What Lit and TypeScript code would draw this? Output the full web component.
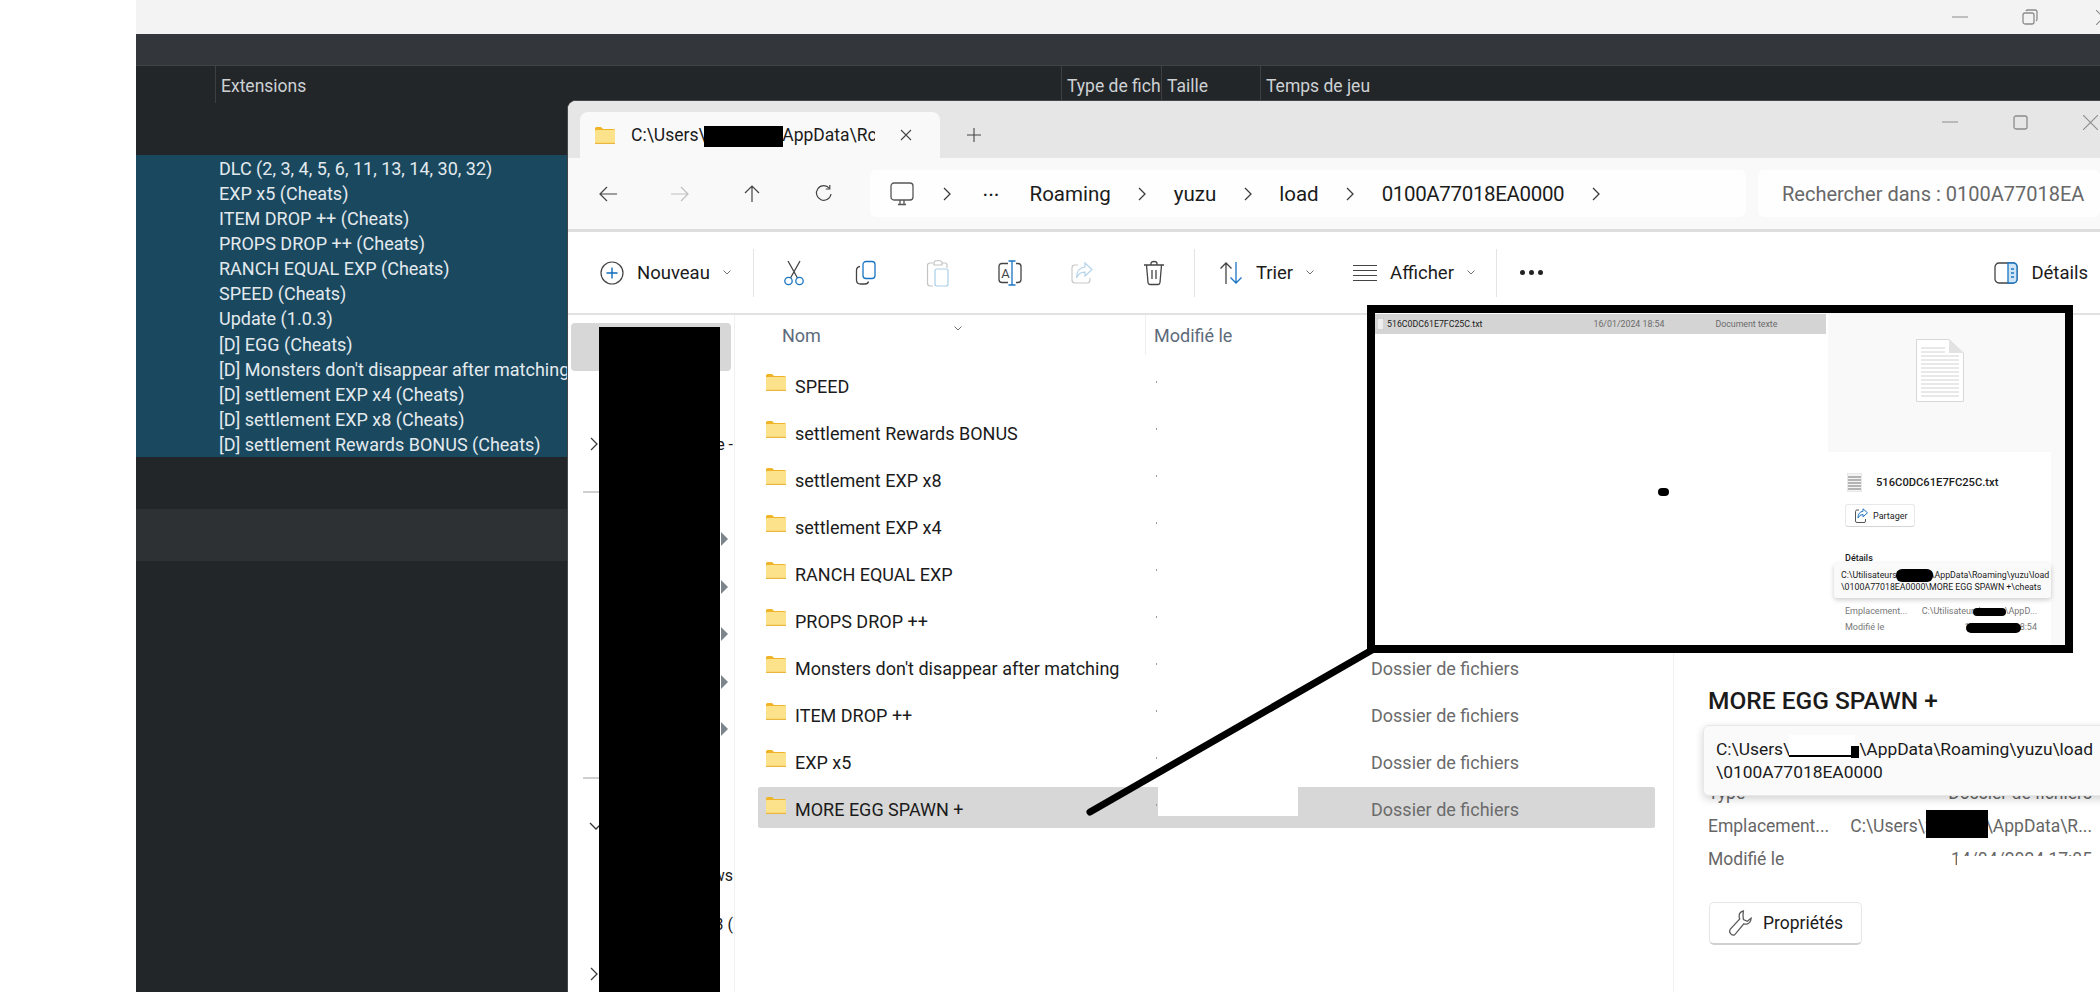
// app.ts - emulator game list with a file explorer window on top, plus the pasted annotation
import { LitElement, html, css } from 'lit';
import { customElement } from 'lit/decorators.js';

const extensions = [
  'DLC (2, 3, 4, 5, 6, 11, 13, 14, 30, 32)',
  'EXP x5 (Cheats)',
  'ITEM DROP ++ (Cheats)',
  'PROPS DROP ++ (Cheats)',
  'RANCH EQUAL EXP (Cheats)',
  'SPEED (Cheats)',
  'Update (1.0.3)',
  '[D] EGG (Cheats)',
  "[D] Monsters don't disappear after matching",
  '[D] settlement EXP x4 (Cheats)',
  '[D] settlement EXP x8 (Cheats)',
  '[D] settlement Rewards BONUS (Cheats)',
];

const folders = [
  'SPEED',
  'settlement Rewards BONUS',
  'settlement EXP x8',
  'settlement EXP x4',
  'RANCH EQUAL EXP',
  'PROPS DROP ++',
  "Monsters don't disappear after matching",
  'ITEM DROP ++',
  'EXP x5',
  'MORE EGG SPAWN +',
];

// things scribbled over the screenshot by whoever took it
const patches = [
  { x: 704, y: 126, w: 79, h: 21, c: '#000', r: 0 },
  { x: 599, y: 327, w: 121, h: 665, c: '#000', r: 0 },
  { x: 1158, y: 787, w: 140, h: 29, c: '#fff', r: 0 },
  { x: 1926, y: 810, w: 62, h: 28, c: '#000', r: 0 },
  { x: 1957, y: 856, w: 140, h: 18, c: '#fff', r: 0 },
  { x: 1789, y: 735, w: 66, h: 24, c: '#fff', r: 0 },
  { x: 1789, y: 755, w: 62, h: 2, c: '#000', r: 0 },
  { x: 1851, y: 746, w: 8, h: 12, c: '#000', r: 0 },
  { x: 1896, y: 569, w: 37, h: 13, c: '#000', r: 6 },
  { x: 1973, y: 608, w: 33, h: 8, c: '#000', r: 4 },
  { x: 1966, y: 623, w: 55, h: 10, c: '#000', r: 5 },
  { x: 1658, y: 488, w: 11, h: 8, c: '#000', r: 5 },
];

const chevR = html`<svg class="chev" width="10" height="16" viewBox="0 0 10 16" fill="none" stroke="#3c3c3c" stroke-width="1.3"><path d="M2 2l6 6-6 6"/></svg>`;
const chevS = html`<svg width="10" height="7" viewBox="0 0 10 7" fill="none" stroke="#707070" stroke-width="1"><path d="M1.5 1.5L5 5l3.5-3.5"/></svg>`;

const folderIcon = html`<svg width="20" height="17" viewBox="0 0 20 17">
  <path d="M0 1.5Q0 0 1.5 0H6l2 2h10.500Q20 2 20 3.500V5H0z" fill="#f0b429"/>
  <rect y="3" width="20" height="14" rx="1" fill="#fde28c"/>
  <rect y="15.800" width="20" height="1.200" fill="#eab73e"/>
</svg>`;

const arrow = (d: string, c: string) => html`<svg width="20" height="18" viewBox="0 0 20 18" fill="none" stroke=${c} stroke-width="1.200"><path d=${d}/></svg>`;

const refresh = html`<svg width="20" height="20" viewBox="0 0 20 20" fill="none" stroke="#444" stroke-width="1.200"><path d="M15.500 4.500A7.300 7.300 0 1 0 17 10"/><path d="M15.800 1v4h-4"/></svg>`;

const monitor = html`<svg width="26" height="24" viewBox="0 0 26 24" fill="none" stroke="#555" stroke-width="1.300"><rect x="2" y="1" width="22" height="17" rx="3"/><path d="M9 22.500h8M11 18v4.500M15 18v4.500"/></svg>`;

const plusCircle = html`<svg width="24" height="24" viewBox="0 0 24 24" fill="none"><circle cx="12" cy="12" r="11" stroke="#444" stroke-width="1.200"/><path d="M12 6.500v11M6.500 12h11" stroke="#0f6cbd" stroke-width="1.400"/></svg>`;

const cut = html`<svg width="22" height="26" viewBox="0 0 22 26" fill="none" stroke-width="1.300"><path d="M5 1l9.500 17M17 1L7.500 18" stroke="#444"/><circle cx="5.500" cy="21" r="3.700" stroke="#1a75c4"/><circle cx="16.500" cy="21" r="3.700" stroke="#1a75c4"/></svg>`;

const copy = html`<svg width="22" height="26" viewBox="0 0 22 26" fill="none" stroke-width="1.300"><rect x="8" y="1.500" width="12" height="17" rx="3" stroke="#1a75c4"/><path d="M5 6.500Q1.500 7 1.500 10.500V20Q1.500 24 5.500 24H10Q13 24 13.500 21.500" stroke="#444"/></svg>`;

const paste = html`<svg width="24" height="28" viewBox="0 0 24 28" fill="none" stroke-width="1.200"><path d="M7 4H4Q1.500 4 1.500 6.500V24Q1.500 27 4 27H7" stroke="#c4c4c4"/><path d="M8 4Q8 1.500 12 1.500T16 4V6H8zM16 4h3Q21 4 21 6V9" stroke="#c4c4c4"/><rect x="9" y="10" width="13" height="17" rx="2" stroke="#a9cfe8"/></svg>`;

const rename = html`<svg width="26" height="26" viewBox="0 0 26 26" fill="none" stroke-width="1.300"><path d="M11 3.500H5Q2 3.500 2 6.500V19.500Q2 22.500 5 22.500H11M19 3.500H21Q24 3.500 24 6.500V19.500Q24 22.500 21 22.500H19" stroke="#444"/><path d="M15 1v24M11.500 1H18.500M11.500 25H18.500" stroke="#1a75c4"/><text x="8.500" y="18" text-anchor="middle" font-family="Roboto, sans-serif" font-size="13" fill="#444" stroke="none">A</text></svg>`;

const share = html`<svg width="24" height="24" viewBox="0 0 24 24" fill="none" stroke-width="1.200"><path d="M8 4H5Q2 4 2 7V19Q2 22 5 22H17Q20 22 20 19V17" stroke="#c8c8c8"/><path d="M15 2l7 6.500-7 6.500v-3.800Q9 11 6.500 17 6.500 7 15 6z" stroke="#b6d3e8"/></svg>`;

const trash = html`<svg width="22" height="26" viewBox="0 0 22 26" fill="none" stroke="#444" stroke-width="1.300"><path d="M1 5h20M8 5V3.500Q8 1.500 11 1.500T14 3.500V5M3.500 5L5 22.500Q5.200 24.500 7 24.500H15Q16.800 24.500 17 22.500L18.500 5M9 10v9M13 10v9"/></svg>`;

const sort = html`<svg width="24" height="24" viewBox="0 0 24 24" fill="none" stroke-width="1.300"><path d="M7 23V2M1.500 7.500L7 2l5.500 5.500" stroke="#444"/><path d="M17 1v21M11.500 16.500L17 22l5.500-5.500" stroke="#1a75c4"/></svg>`;

const lines = html`<svg width="24" height="18" viewBox="0 0 24 18" fill="none" stroke="#444" stroke-width="1.200"><path d="M0 1.500h24M0 6.500h24M0 11.500h24M0 16.500h24"/></svg>`;

const panel = html`<svg width="24" height="22" viewBox="0 0 24 22" fill="none" stroke-width="1.300"><rect x="1" y="1" width="22" height="20" rx="4" stroke="#444"/><path d="M14 1h5Q23 1 23 5V17Q23 21 19 21H14z" fill="#cfe4f5" stroke="#1a75c4"/><path d="M17 7h3M17 11h3M17 15h3" stroke="#1a75c4"/></svg>`;

const wrench = html`<svg width="24" height="28" viewBox="0 0 28 32" fill="none" stroke="#5c5c5c" stroke-width="1.500"><path d="M18 2Q13 3 13 8q0 2 .7 3.200L2.500 23.500Q1 26 3 28.500t5 1L18.500 17q2 .7 3.500.2 4.500-1.200 5-6.700l-4.500 3.500-4.500-2-.5-5z"/></svg>`;

const docLarge = html`<svg width="48" height="63" viewBox="0 0 48 63"><path d="M.5.500H33L47.500 14V62.500H.5z" fill="#fff" stroke="#d8d8d8"/><path d="M33 .5V14H47.500z" fill="#e2e2e2"/><path d="M5 9h24M5 13h24M5 17h38M5 21h38M5 25h38M5 29h38M5 33h38M5 37h38M5 41h38M5 45h38M5 49h38M5 53h38M5 57h38" stroke="#d2d2d2" stroke-width="1"/></svg>`;

const docSmall = html`<svg width="15" height="19" viewBox="0 0 15 19"><rect width="15" height="19" fill="#f4f4f4" stroke="#ddd"/><path d="M1 4h13M1 7h13M1 10h13M1 13h13M1 16h13" stroke="#b4b4b4" stroke-width="2"/></svg>`;

const docTiny = html`<svg width="7" height="12" viewBox="0 0 7 12"><rect width="7" height="12" fill="#eee" stroke="#bbb"/></svg>`;

const shareSmall = html`<svg width="13" height="15" viewBox="0 0 13 15" fill="none" stroke-width="1"><path d="M4 2H2Q.5 2 .5 3.500V13Q.5 14.500 2 14.500H9Q10.500 14.500 10.500 13V11" stroke="#555"/><path d="M8 .8l4.500 4L8 8.800V6.500Q4.500 6.500 3 10 3 4 8 3.300z" stroke="#1a75c4"/></svg>`;

const grip = html`<svg class="grip" width="7" height="14" viewBox="0 0 7 14"><path d="M0 0l7 7-7 7z" fill="#7c858b"/></svg>`;

const winMin = html`<svg width="16" height="2" viewBox="0 0 16 2"><path d="M0 1h16" stroke="#8c8c8c" stroke-width="1"/></svg>`;
const winRestore = html`<svg width="16" height="16" viewBox="0 0 16 16" fill="none" stroke="#8c8c8c" stroke-width="1.300"><rect x="1" y="4" width="11" height="11" rx="2"/><path d="M4 2Q4.500 1 6 1h7q2 0 2 2v7q0 1.500-1 2"/></svg>`;
const winMax = html`<svg width="15" height="15" viewBox="0 0 15 15" fill="none" stroke="#8c8c8c" stroke-width="1.300"><rect x="1" y="1" width="13" height="13" rx="2"/></svg>`;
const winClose = html`<svg width="15" height="15" viewBox="0 0 15 15" fill="none" stroke="#8c8c8c" stroke-width="1.100"><path d="M0 0l15 15M15 0L0 15"/></svg>`;
const xSmall = html`<svg width="12" height="12" viewBox="0 0 12 12" fill="none" stroke="#444" stroke-width="1.100"><path d="M1 1l10 10M11 1L1 11"/></svg>`;
const plus = html`<svg width="14" height="14" viewBox="0 0 14 14" fill="none" stroke="#444" stroke-width="1.100"><path d="M7 0v14M0 7h14"/></svg>`;

@customElement('app-root')
export class AppRoot extends LitElement {
  static override styles = css`
    :host {
      display: block;
      position: relative;
      width: 2100px;
      height: 992px;
      overflow: hidden;
      background: #fff;
      font-family: Roboto, 'Open Sans', sans-serif;
      font-size: 18px;
      color: #1b1b1b;
    }

    /* emulator behind */
    .app {
      margin-left: 136px;
      height: 992px;
      background: #232629;
      color: #e3eaee;
    }
    .app-title {
      height: 34px;
      background: #f3f3f3;
      display: flex;
      align-items: center;
      justify-content: flex-end;
    }
    .app-title span { display: flex; }
    .app-title .t-min { margin-right: 54px; }
    .app-title .t-res { margin-right: 58px; }
    .app-title .t-x { margin-right: -11px; }
    .app-menu {
      height: 31px;
      background: #33373b;
      border-bottom: 1px solid #3f4347;
    }
    .app-head {
      height: 37px;
      display: grid;
      grid-template-columns: 79px 846px 100px 99px 1fr;
      font-size: 17.500px;
      color: #cdd1d4;
    }
    .app-head div {
      overflow: hidden;
      white-space: nowrap;
      padding: 10px 0 0 5px;
      border-left: 1px solid #3c4043;
    }
    .app-head div:first-child { border-left: none; }
    .app-list {
      margin-top: 52px;
      height: 301px;
      background: #1a485f;
      padding: 1px 0 0 83px;
      overflow: hidden;
    }
    .app-list div {
      height: 25.080px;
      line-height: 25px;
      white-space: nowrap;
    }
    .app-band {
      margin-top: 52px;
      height: 52px;
      background: #2e3134;
    }

    /* explorer window */
    .win {
      position: absolute;
      left: 567px;
      top: 100px;
      width: 1540px;
      height: 892px;
      display: flex;
      flex-direction: column;
      background: #fff;
      border-top: 1px solid #45484b;
      border-left: 1px solid #45484b;
      border-top-left-radius: 9px;
      overflow: hidden;
    }
    .win-title {
      flex: none;
      height: 57px;
      background: #e6e6e6;
      display: flex;
      align-items: flex-end;
      padding-left: 12px;
      box-sizing: border-box;
      position: relative;
    }
    .tab {
      width: 360px;
      height: 46px;
      box-sizing: border-box;
      background: #f9f9f9;
      border-radius: 8px 8px 0 0;
      display: flex;
      align-items: center;
      padding: 0 0 0 15px;
    }
    .tab .label {
      width: 244px;
      margin-left: 16px;
      overflow: hidden;
      white-space: nowrap;
      font-size: 17.500px;
    }
    .tab .x { margin-left: 25px; display: flex; }
    .newtab { margin-left: 27px; height: 46px; display: flex; align-items: center; }
    .winctl {
      position: absolute;
      top: 0;
      right: 1px;
      height: 42px;
      display: flex;
      align-items: center;
    }
    .winctl span { display: flex; }
    .winctl .c-min { margin-right: 55px; }
    .winctl .c-max { margin-right: 55px; }
    .winctl .c-x { margin-right: 9px; }
    .win-nav {
      flex: none;
      height: 71px;
      background: #f9f9f9;
      border-bottom: 3px solid #dedede;
      display: flex;
      align-items: center;
      padding-left: 4px;
    }
    .nav-btn {
      flex: none;
      width: 72px;
      display: flex;
      justify-content: center;
    }
    .crumbs {
      flex: none;
      margin-left: 10px;
      width: 876px;
      height: 47px;
      box-sizing: border-box;
      padding-left: 19px;
      background: #fefefe;
      border-radius: 6px;
      display: flex;
      align-items: center;
      gap: 26.500px;
      font-size: 20.500px;
      white-space: nowrap;
    }
    .crumbs .dots { width: 20px; letter-spacing: 1px; font-weight: 700; font-size: 16px; margin: -6px 0 0 5px; }
    .crumbs .id { letter-spacing: -0.35px; }
    .search {
      flex: none;
      margin-left: 12px;
      width: 342px;
      height: 47px;
      box-sizing: border-box;
      padding-left: 24px;
      background: #fefefe;
      border-radius: 6px;
      display: flex;
      align-items: center;
      font-size: 20px;
      color: #686868;
      white-space: nowrap;
    }
    .win-cmd {
      flex: none;
      height: 83px;
      box-sizing: border-box;
      width: 1532px;
      border-bottom: 2px solid #e2e2e2;
      display: flex;
      align-items: center;
      padding-left: 32px;
    }
    .cmd-text {
      display: flex;
      align-items: center;
      white-space: nowrap;
      font-size: 18.500px;
    }
    .cmd-text span { margin: 0 12px 0 13px; }
    .cmd-text .last { margin: 0 0 0 13px; }
    .sep {
      flex: none;
      width: 1px;
      height: 48px;
      background: #e4e4e4;
    }
    .sep.first { margin: 0 4px 0 21px; }
    .sep.mid { margin: 0 24px 0 4px; }
    .sep.last { margin-left: 20px; }
    .cmd-btn {
      flex: none;
      width: 72px;
      display: flex;
      justify-content: center;
    }
    .cmd-view { margin-left: 38px; }
    .more { display: flex; gap: 4px; margin-left: 23px; }
    .more i { width: 5px; height: 5px; border-radius: 50%; background: #222; }
    .cmd-right { margin: 0 12px 0 auto; }

    .win-body {
      flex: 1;
      display: flex;
      min-height: 0;
      width: 1532px;
    }

    /* navigation pane */
    .side {
      flex: none;
      width: 167px;
      box-sizing: border-box;
      border-right: 1px solid #f1f1f1;
      padding-top: 8px;
    }
    .side .current {
      margin: 0 3px 2px;
      height: 48px;
      border-radius: 4px;
      background: #d7d7d7;
    }
    .side-row {
      height: 47.500px;
      display: flex;
      align-items: center;
      justify-content: space-between;
      padding: 0 1px 0 21px;
      box-sizing: border-box;
      font-size: 16px;
      white-space: nowrap;
      overflow: hidden;
    }
    .side-row.low { height: 49px; }
    .side-row .grip { margin-right: 5px; }
    .rule {
      height: 2px;
      width: 60px;
      margin-left: -6px;
      background: #cfcfcf;
    }

    /* file list */
    .main {
      flex: none;
      width: 938px;
    }
    .list-head {
      height: 40px;
      display: flex;
      font-size: 18px;
      color: #5c6b7b;
      position: relative;
    }
    .list-head .nom { width: 363px; margin-left: 47px; padding-top: 10px; }
    .list-head .mod { flex: 1; border-left: 1px solid #efefef; padding: 10px 0 0 8px; }
    .sort-mark { position: absolute; left: 218px; top: 0; }
    .rows {
      margin: 9px 0 0 23px;
      width: 897px;
      display: flex;
      flex-direction: column;
      gap: 6px;
    }
    .row {
      height: 41px;
      display: grid;
      grid-template-columns: 398px 215px 1fr;
      align-items: center;
      border-radius: 2px;
    }
    .row.sel { background: #d7d7d7; }
    .row .name {
      display: flex;
      align-items: center;
      gap: 9px;
      padding-left: 8px;
      white-space: nowrap;
    }
    .row .name svg { margin-top: -4px; flex: none; }
    .row .name span { margin-top: 3px; }
    .tick { width: 1px; height: 2px; background: #9b9b9b; margin-top: -5px; }
    .row .type { color: #6b6b6b; margin-top: 3px; white-space: nowrap; }

    /* details pane */
    .details {
      flex: none;
      width: 426px;
      box-sizing: border-box;
      border-left: 1px solid #f1f1f1;
      padding: 371px 7px 0 34px;
    }
    .details h2 {
      margin: 0 0 67px;
      font-size: 24.500px;
      line-height: 30px;
      font-weight: 500;
      white-space: nowrap;
    }
    .prop {
      display: flex;
      justify-content: space-between;
      height: 33px;
      font-size: 17.500px;
      color: #666;
      white-space: nowrap;
    }
    .prop-stack { margin-bottom: 20px; }
    .btn {
      width: 153px;
      height: 43px;
      margin-left: 1px;
      box-sizing: border-box;
      border: 1px solid #e6e6e6;
      border-bottom: 2px solid #d0d0d0;
      border-radius: 5px;
      display: flex;
      align-items: center;
      gap: 11px;
      padding-left: 18px;
      font-size: 17.500px;
      white-space: nowrap;
      background: #fff;
    }

    /* stuff lying over the window */
    .tip {
      position: absolute;
      left: 1703px;
      top: 725px;
      width: 420px;
      height: 71px;
      box-sizing: border-box;
      padding: 12px 0 0 12px;
      background: #fafafa;
      border: 1px solid #e8e8e8;
      border-radius: 6px;
      box-shadow: 0 3px 8px rgba(0, 0, 0, 0.18);
      font-size: 17.400px;
      line-height: 23px;
      white-space: nowrap;
    }
    .patch { position: absolute; }

    .shot {
      position: absolute;
      left: 1367px;
      top: 305px;
      width: 706px;
      height: 348px;
      box-sizing: border-box;
      border: 8px solid #000;
      background: #fff;
      display: grid;
      grid-template-columns: 451px 2px 223px 1fr;
      font-size: 9px;
    }
    .shot-list .r {
      height: 20px;
      margin-top: 1px;
      background: #d4d4d4;
      display: flex;
      align-items: center;
      padding-left: 2px;
      color: #222;
      white-space: nowrap;
      font-size: 8.800px;
    }
    .shot-list .r svg { margin-right: 3px; }
    .shot-list .r .d { margin-left: 111px; color: #6b6b6b; }
    .shot-list .r .t { margin-left: 51px; color: #6b6b6b; }
    .shot-pane { display: flex; flex-direction: column; position: relative; }
    .shot-prev {
      height: 139px;
      background: #f9f9f9;
      display: flex;
      justify-content: center;
      padding-top: 26px;
      box-sizing: border-box;
    }
    .shot-info {
      flex: 1;
      padding: 21px 14px 0 17px;
      box-sizing: border-box;
    }
    .shot-name {
      display: flex;
      align-items: center;
      gap: 14px;
      margin-left: 2px;
      font-size: 11.200px;
      font-weight: 500;
      white-space: nowrap;
    }
    .shot-btn {
      margin-top: 12px;
      width: 70px;
      height: 23px;
      box-sizing: border-box;
      border: 1px solid #e8e8e8;
      border-bottom-color: #d4d4d4;
      border-radius: 3px;
      display: flex;
      align-items: center;
      gap: 5px;
      padding-left: 9px;
      white-space: nowrap;
    }
    .shot-h { margin-top: 26px; font-weight: 500; }
    .shot-prop {
      display: flex;
      justify-content: space-between;
      color: #777;
      height: 16px;
      line-height: 16px;
      white-space: nowrap;
    }
    .shot-props { margin-top: 40px; }
    .shot-tip {
      position: absolute;
      left: 6px;
      top: 250px;
      width: 217px;
      height: 35px;
      box-sizing: border-box;
      padding: 6px 0 0 7px;
      background: #fafafa;
      border-radius: 3px;
      box-shadow: 0 2px 5px rgba(0, 0, 0, 0.2);
      font-size: 8.800px;
      line-height: 12px;
      white-space: nowrap;
    }
    .shot-edge { background: #f9f9f9; }
    .stroke { position: absolute; left: 0; top: 0; pointer-events: none; }
  `;

  override render() {
    return html`
      <div class="app">
        <div class="app-title">
          <span class="t-min">${winMin}</span>
          <span class="t-res">${winRestore}</span>
          <span class="t-x">${winClose}</span>
        </div>
        <div class="app-menu"></div>
        <div class="app-head">
          <div></div>
          <div>Extensions</div>
          <div>Type de fich</div>
          <div>Taille</div>
          <div>Temps de jeu</div>
        </div>
        <div class="app-list">${extensions.map(e => html`<div>${e}</div>`)}</div>
        <div class="app-band"></div>
      </div>

      <div class="win">
        <div class="win-title">
          <div class="tab">
            ${folderIcon}
            <div class="label">C:\\Users\\xxxxxxxx\\AppData\\Rc</div>
            <span class="x">${xSmall}</span>
          </div>
          <div class="newtab">${plus}</div>
          <div class="winctl">
            <span class="c-min">${winMin}</span>
            <span class="c-max">${winMax}</span>
            <span class="c-x">${winClose}</span>
          </div>
        </div>

        <div class="win-nav">
          <div class="nav-btn">${arrow('M19 9H2M9 2L2 9l7 7', '#444')}</div>
          <div class="nav-btn">${arrow('M1 9h17M11 2l7 7-7 7', '#c0c0c0')}</div>
          <div class="nav-btn">${arrow('M10 17V1M3 8l7-7 7 7', '#444')}</div>
          <div class="nav-btn">${refresh}</div>
          <div class="crumbs">
            ${monitor} ${chevR}
            <span class="dots">...</span>
            <span>Roaming</span> ${chevR}
            <span>yuzu</span> ${chevR}
            <span>load</span> ${chevR}
            <span class="id">0100A77018EA0000</span> ${chevR}
          </div>
          <div class="search">Rechercher dans : 0100A77018EA</div>
        </div>

        <div class="win-cmd">
          <div class="cmd-text">${plusCircle}<span>Nouveau</span>${chevS}</div>
          <div class="sep first"></div>
          <div class="cmd-btn">${cut}</div>
          <div class="cmd-btn">${copy}</div>
          <div class="cmd-btn">${paste}</div>
          <div class="cmd-btn">${rename}</div>
          <div class="cmd-btn">${share}</div>
          <div class="cmd-btn">${trash}</div>
          <div class="sep mid"></div>
          <div class="cmd-text">${sort}<span>Trier</span>${chevS}</div>
          <div class="cmd-text cmd-view">${lines}<span>Afficher</span>${chevS}</div>
          <div class="sep last"></div>
          <div class="more"><i></i><i></i><i></i></div>
          <div class="cmd-text cmd-right">${panel}<span class="last">Détails</span></div>
        </div>

        <div class="win-body">
          <div class="side">
            <div class="current"></div>
            <div class="side-row"></div>
            <div class="side-row">${chevR}<span>e -</span></div>
            <div class="side-row"><div class="rule"></div></div>
            <div class="side-row"><span></span>${grip}</div>
            <div class="side-row"><span></span>${grip}</div>
            <div class="side-row"><span></span>${grip}</div>
            <div class="side-row"><span></span>${grip}</div>
            <div class="side-row"><span></span>${grip}</div>
            <div class="side-row low"><div class="rule"></div></div>
            <div class="side-row low"><svg width="14" height="9" viewBox="0 0 14 9" fill="none" stroke="#333" stroke-width="1.300"><path d="M1 1l6 6 6-6"/></svg></div>
            <div class="side-row low"><span></span><span>ws</span></div>
            <div class="side-row low"><span></span><span>3 (</span></div>
            <div class="side-row low">${chevR}</div>
          </div>

          <div class="main">
            <div class="list-head">
              <div class="nom">Nom</div>
              <div class="mod">Modifié le</div>
              <span class="sort-mark">${chevS}</span>
            </div>
            <div class="rows">
              ${folders.map((f, i) => html`
                <div class="row ${i === folders.length - 1 ? 'sel' : ''}">
                  <div class="name">${folderIcon}<span>${f}</span></div>
                  <div class="tick"></div>
                  <div class="type">${i > 5 ? 'Dossier de fichiers' : ''}</div>
                </div>`)}
            </div>
          </div>

          <div class="details">
            <h2>MORE EGG SPAWN +</h2>
            <div class="prop-stack">
              <div class="prop"><span>Type</span><span>Dossier de fichiers</span></div>
              <div class="prop"><span>Emplacement...</span><span>C:\\Users\\xxxxxxx\\AppData\\R...</span></div>
              <div class="prop"><span>Modifié le</span><span>14/04/2024 17:05</span></div>
            </div>
            <div class="btn">${wrench}<span>Propriétés</span></div>
          </div>
        </div>
      </div>

      <div class="tip">C:\\Users\\xxxxxxxx\\AppData\\Roaming\\yuzu\\load<br>\\0100A77018EA0000</div>

      <div class="shot">
        <div class="shot-list">
          <div class="r">${docTiny}<span>516C0DC61E7FC25C.txt</span><span class="d">16/01/2024 18:54</span><span class="t">Document texte</span></div>
        </div>
        <div></div>
        <div class="shot-pane">
          <div class="shot-prev">${docLarge}</div>
          <div class="shot-info">
            <div class="shot-name">${docSmall}<span>516C0DC61E7FC25C.txt</span></div>
            <div class="shot-btn">${shareSmall}<span>Partager</span></div>
            <div class="shot-h">Détails</div>
            <div class="shot-props">
              <div class="shot-prop"><span>Emplacement...</span><span>C:\\Utilisateurs\\xxxxx\\AppD...</span></div>
              <div class="shot-prop"><span>Modifié le</span><span>16/01/2024 18:54</span></div>
            </div>
          </div>
          <div class="shot-tip">C:\\Utilisateurs\\xxxxxxx\\AppData\\Roaming\\yuzu\\load<br>\\0100A77018EA0000\\MORE EGG SPAWN +\\cheats</div>
        </div>
        <div class="shot-edge"></div>
      </div>

      ${patches.map(p => html`<div class="patch" style="left:${p.x}px;top:${p.y}px;width:${p.w}px;height:${p.h}px;background:${p.c};border-radius:${p.r}px"></div>`)}

      <svg class="stroke" width="2100" height="992" fill="none">
        <path d="M1372 650L1090 812" stroke="#000" stroke-width="7" stroke-linecap="round"/>
      </svg>
    `;
  }
}

declare global {
  interface HTMLElementTagNameMap {
    'app-root': AppRoot;
  }
}
